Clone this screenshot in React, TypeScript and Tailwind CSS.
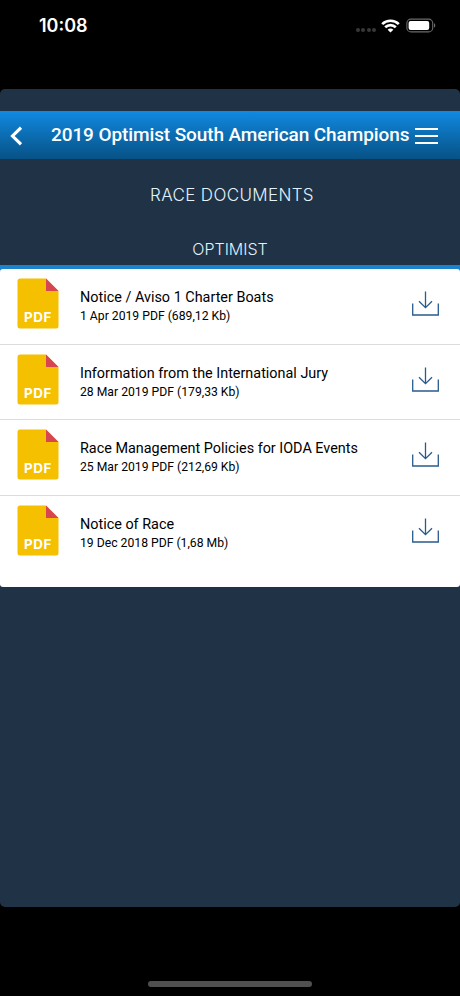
interface RaceDocument {
  title: string;
  details: string;
}

const documents: RaceDocument[] = [
  { title: "Notice / Aviso 1 Charter Boats", details: "1 Apr 2019 PDF (689,12 Kb)" },
  { title: "Information from the International Jury", details: "28 Mar 2019 PDF (179,33 Kb)" },
  { title: "Race Management Policies for IODA Events", details: "25 Mar 2019 PDF (212,69 Kb)" },
  { title: "Notice of Race", details: "19 Dec 2018 PDF (1,68 Mb)" },
];

const StatusBar = () => (
  <div className="flex h-[89px] shrink-0 items-start justify-between pl-[39px] pr-[24px] pt-[12px]">
    <span className="font-['Inter',sans-serif] text-[18px] font-semibold leading-[27px] text-white">10:08</span>
    <div className="flex items-center pt-[6px]">
      <div className="mr-[5px] mt-[9px] flex gap-[1.5px]">
        <span className="size-[4px] rounded-full bg-[#383838]" />
        <span className="size-[4px] rounded-full bg-[#383838]" />
        <span className="size-[4px] rounded-full bg-[#383838]" />
        <span className="size-[4px] rounded-full bg-[#383838]" />
      </div>
      <svg className="mr-[6px] h-[14px] w-[19px]" viewBox="0 0 19 14" fill="none" stroke="white" strokeWidth="2.7">
        <path d="M1.2 5.1C5.8.6 13.2.6 17.8 5.1" />
        <path d="M4.2 8.2C7.2 5.3 11.8 5.3 14.8 8.2" />
        <path d="M9.5 13.6 6.6 10.7C8.2 9.2 10.8 9.2 12.4 10.7Z" fill="white" stroke="none" />
      </svg>
      <svg className="h-[15px] w-[30px]" viewBox="0 0 30 15" fill="none">
        <rect x="0.9" y="1.1" width="25.8" height="12.8" rx="4" stroke="#6b6b6b" strokeWidth="1.1" />
        <rect x="2.6" y="2.9" width="20.6" height="9.2" rx="2" fill="white" />
        <path d="M28 5.3c1.7.5 1.7 3.9 0 4.4Z" fill="#6b6b6b" />
      </svg>
    </div>
  </div>
);

const Header = () => (
  <header className="flex h-[48px] shrink-0 items-center bg-linear-to-b from-[#118ae2] to-[#075286]">
    <button className="flex h-full w-[51px] items-center pl-[10px]" aria-label="Back">
      <svg className="mt-[2px] h-[20px] w-[12px]" viewBox="0 0 12 20" fill="none" stroke="white" strokeWidth="3.1">
        <path d="M11 1.7 2.5 10 11 18.3" />
      </svg>
    </button>
    <h1 className="w-[359px] whitespace-nowrap font-['Roboto',sans-serif] text-[19px] font-medium leading-[28px] tracking-[-0.1px] text-white">
      2019 Optimist South American Champions
    </h1>
    <button className="ml-[5px] flex w-[23px] flex-col gap-[5px] pt-[2px]" aria-label="Menu">
      <span className="h-[2px] w-full bg-white" />
      <span className="h-[2px] w-full bg-white" />
      <span className="h-[2px] w-full bg-white" />
    </button>
  </header>
);

const PdfIcon = () => (
  <svg className="h-[51px] w-[42px] shrink-0" viewBox="0 0 42 51">
    <path d="M3 0.5H29L41.5 13V48Q41.5 50.5 39 50.5H3Q.5 50.5.5 48V3Q.5.5 3 .5Z" fill="#f5c000" />
    <path d="M29 .5 41.5 13H29Z" fill="#d64550" />
    <text x="7" y="44" fill="white" className="font-['Inter',sans-serif] text-[13.4px] font-bold tracking-[0.6px]">
      PDF
    </text>
  </svg>
);

const DownloadIcon = () => (
  <svg className="h-[26px] w-[27px] shrink-0" viewBox="0 0 27 26" fill="none" stroke="#285b8c" strokeWidth="1.3">
    <path d="M.7 12.5V24H26.3V12.5" />
    <path d="M13.5 .5V16.5M7 10.2 13.5 16.7 20 10.2" />
  </svg>
);

const DocumentRow = ({ title, details }: RaceDocument) => (
  <li className="flex h-[75.5px] items-start border-b border-[#dcdcdc] pl-[17px] pr-[21px] pt-[9px] last:border-b-0">
    <PdfIcon />
    <div className="ml-[21px] flex-1 pt-[10.4px] font-['Roboto',sans-serif] text-black">
      <p className="text-[14.4px] leading-[20px]">{title}</p>
      <p className="text-[12.2px] leading-[16.5px]">{details}</p>
    </div>
    <button className="mt-[13px]" aria-label="Download">
      <DownloadIcon />
    </button>
  </li>
);

const App = () => {
  return (
    <div className="flex h-[996px] w-[460px] flex-col overflow-hidden bg-black">
      <StatusBar />
      <main className="flex h-[818px] shrink-0 flex-col overflow-hidden rounded-[5px] bg-[#203246] pt-[22px]">
        <Header />
        <div className="flex h-[110px] shrink-0 flex-col items-center border-b-[4px] border-[#1b83cd] pt-[24px] font-['Inter',sans-serif] font-light text-[#e3f2fa]">
          <h2 className="pl-[4px] text-[17px] leading-[24px] tracking-[0.35px]">RACE DOCUMENTS</h2>
          <h3 className="mt-[30px] text-[16px] leading-[24px]">OPTIMIST</h3>
        </div>
        <div className="bg-[linear-gradient(#1b83cd_50%,#203246_50%)]">
          <ul className="h-[318px] rounded-[3px] bg-white">
            {documents.map((doc) => (
              <DocumentRow key={doc.title} title={doc.title} details={doc.details} />
            ))}
          </ul>
        </div>
      </main>
      <div className="flex flex-1 items-end justify-center pb-[9px]">
        <div className="h-[6px] w-[164px] rounded-full bg-[#505050]" />
      </div>
    </div>
  );
};

export default App;
